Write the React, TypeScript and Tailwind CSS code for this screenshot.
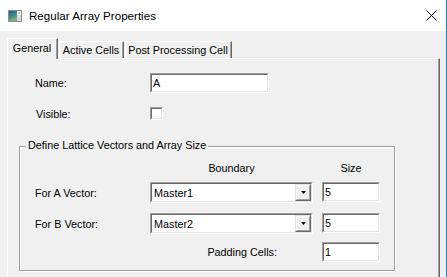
import React from "react";

function Sunken({ className = "", innerClass = "", children }: { className?: string; innerClass?: string; children?: React.ReactNode }) {
  return (
    <div className={"border border-t-[#a0a0a0] border-l-[#a0a0a0] border-b-white border-r-white " + className}>
      <div className={"h-full border border-t-[#696969] border-l-[#696969] border-b-[#e3e3e3] border-r-[#e3e3e3] bg-white " + innerClass}>
        {children}
      </div>
    </div>
  );
}

function Combo({ value }: { value: string }) {
  return (
    <Sunken className="w-[163px] h-[21px]" innerClass="flex items-stretch">
      <div className="flex-1 pl-[2px] flex items-center leading-[14px]">{value}</div>
      <div className="w-[16px] border border-t-[#e3e3e3] border-l-[#e3e3e3] border-b-[#696969] border-r-[#696969]">
        <div className="h-full border border-t-white border-l-white border-b-[#a0a0a0] border-r-[#a0a0a0] bg-[#f0f0f0] flex items-center justify-center">
          <svg width="5" height="3" viewBox="0 0 5 3" className="block">
            <path d="M0 0H5L2.5 3Z" fill="#000" />
          </svg>
        </div>
      </div>
    </Sunken>
  );
}

function TextBox({ value, className = "" }: { value: string; className?: string }) {
  return (
    <Sunken className={"h-[20px] " + className} innerClass="pl-[1px] flex items-center leading-[14px]">
      {value}
    </Sunken>
  );
}

function AppIcon() {
  return (
    <svg width="14" height="12" viewBox="0 0 14 12" className="block">
      <defs>
        <linearGradient id="g1" x1="0" y1="0" x2="0.4" y2="1">
          <stop offset="0" stopColor="#1d5d92" />
          <stop offset="0.55" stopColor="#3f8a86" />
          <stop offset="1" stopColor="#7cb46e" />
        </linearGradient>
      </defs>
      <rect x="0.5" y="0.5" width="13" height="11" fill="#f4f4f4" stroke="#8c8c8c" />
      <rect x="1" y="1" width="8" height="10" fill="url(#g1)" />
      <rect x="9" y="1" width="4" height="4" fill="#ffffff" />
      <rect x="9" y="5" width="4" height="6" fill="#d9d9d9" />
      <rect x="10" y="2" width="2" height="2" fill="#b8c8d8" />
    </svg>
  );
}

export default function App() {
  return (
    <div className="w-[447px] h-[277px] overflow-hidden bg-[#f0f0f0] border-r border-r-[#1a7fd6] flex flex-col font-['Liberation_Sans',Arial,sans-serif] text-black">
      {/* Title bar */}
      <div className="h-[31px] bg-white flex items-center pl-[8px] pr-[9px] shrink-0">
        <AppIcon />
        <div className="ml-[7px] text-[11.6px] leading-[16px]">Regular Array Properties</div>
        <svg width="11" height="11" viewBox="0 0 11 11" className="ml-auto block">
          <path d="M0.5 0.5L10.5 10.5M10.5 0.5L0.5 10.5" stroke="#000" strokeWidth="1" />
        </svg>
      </div>

      {/* Body */}
      <div className="flex-1 flex flex-col pl-[7px] pr-[6px] pt-[7px] text-[10.8px]">
        {/* Tabs */}
        <div className="flex items-end h-[20px] shrink-0">
          <div className="relative z-10 -mb-px w-[51px] h-[21px] bg-[#f0f0f0] border-l border-t border-r border-l-white border-t-white border-r-[#696969]">
            <div className="h-full border-r border-r-[#a0a0a0] flex justify-center pt-[2px] leading-[14px]">General</div>
          </div>
          <div className="ml-px w-[65px] h-[17px] border-l border-t border-r border-l-white border-t-white border-r-[#696969]">
            <div className="h-full border-r border-r-[#a0a0a0] flex justify-center pt-[1px] leading-[14px]">Active Cells</div>
          </div>
          <div className="ml-px w-[107px] h-[17px] border-l border-t border-r border-l-white border-t-white border-r-[#696969]">
            <div className="h-full border-r border-r-[#a0a0a0] flex justify-center pt-[1px] leading-[14px]">Post Processing Cell</div>
          </div>
        </div>

        {/* Panel */}
        <div className="flex-1 border-l border-t border-r border-l-white border-t-white border-r-[#696969]">
          <div className="h-full border-r border-r-[#a0a0a0] flex flex-col">
            {/* Name */}
            <div className="mt-[14px] pl-[27px] flex items-center h-[20px]">
              <div className="w-[115px] leading-[14px]">Name:</div>
              <TextBox value="A" className="w-[119px]" />
            </div>
            {/* Visible */}
            <div className="mt-[14px] pl-[27px] flex items-center h-[13px]">
              <div className="w-[115px] pl-[1px] leading-[14px]">Visible:</div>
              <Sunken className="w-[13px] h-[13px]" />
            </div>

            {/* Group */}
            <div className="relative mt-[26px] ml-[11px] w-[376px] h-[125px] border border-[#a0a0a0] shadow-[inset_1px_1px_0_#fff,1px_1px_0_#fff]">
              <div className="absolute left-[6px] top-[-9px] px-[2px] bg-[#f0f0f0] leading-[14px]">Define Lattice Vectors and Array Size</div>
              <div className="pl-[15px] flex flex-col">
                <div className="mt-[14px] flex h-[14px] leading-[14px]">
                  <div className="w-[115px]" />
                  <div className="w-[163px] text-center">Boundary</div>
                  <div className="ml-[9px] w-[58px] text-center">Size</div>
                </div>
                <div className="mt-[7px] flex items-center h-[21px]">
                  <div className="w-[115px] leading-[14px]">For A Vector:</div>
                  <Combo value="Master1" />
                  <TextBox value="5" className="ml-[9px] w-[58px] self-start" />
                </div>
                <div className="mt-[10px] flex items-center h-[21px]">
                  <div className="w-[115px] leading-[14px]">For B Vector:</div>
                  <Combo value="Master2" />
                  <TextBox value="5" className="ml-[9px] w-[58px] self-start" />
                </div>
                <div className="mt-[8px] flex items-center h-[20px]">
                  <div className="w-[278px] pr-[36px] text-right leading-[14px]">Padding Cells:</div>
                  <TextBox value="1" className="ml-[9px] w-[58px]" />
                </div>
              </div>
            </div>
          </div>
        </div>
      </div>
    </div>
  );
}
